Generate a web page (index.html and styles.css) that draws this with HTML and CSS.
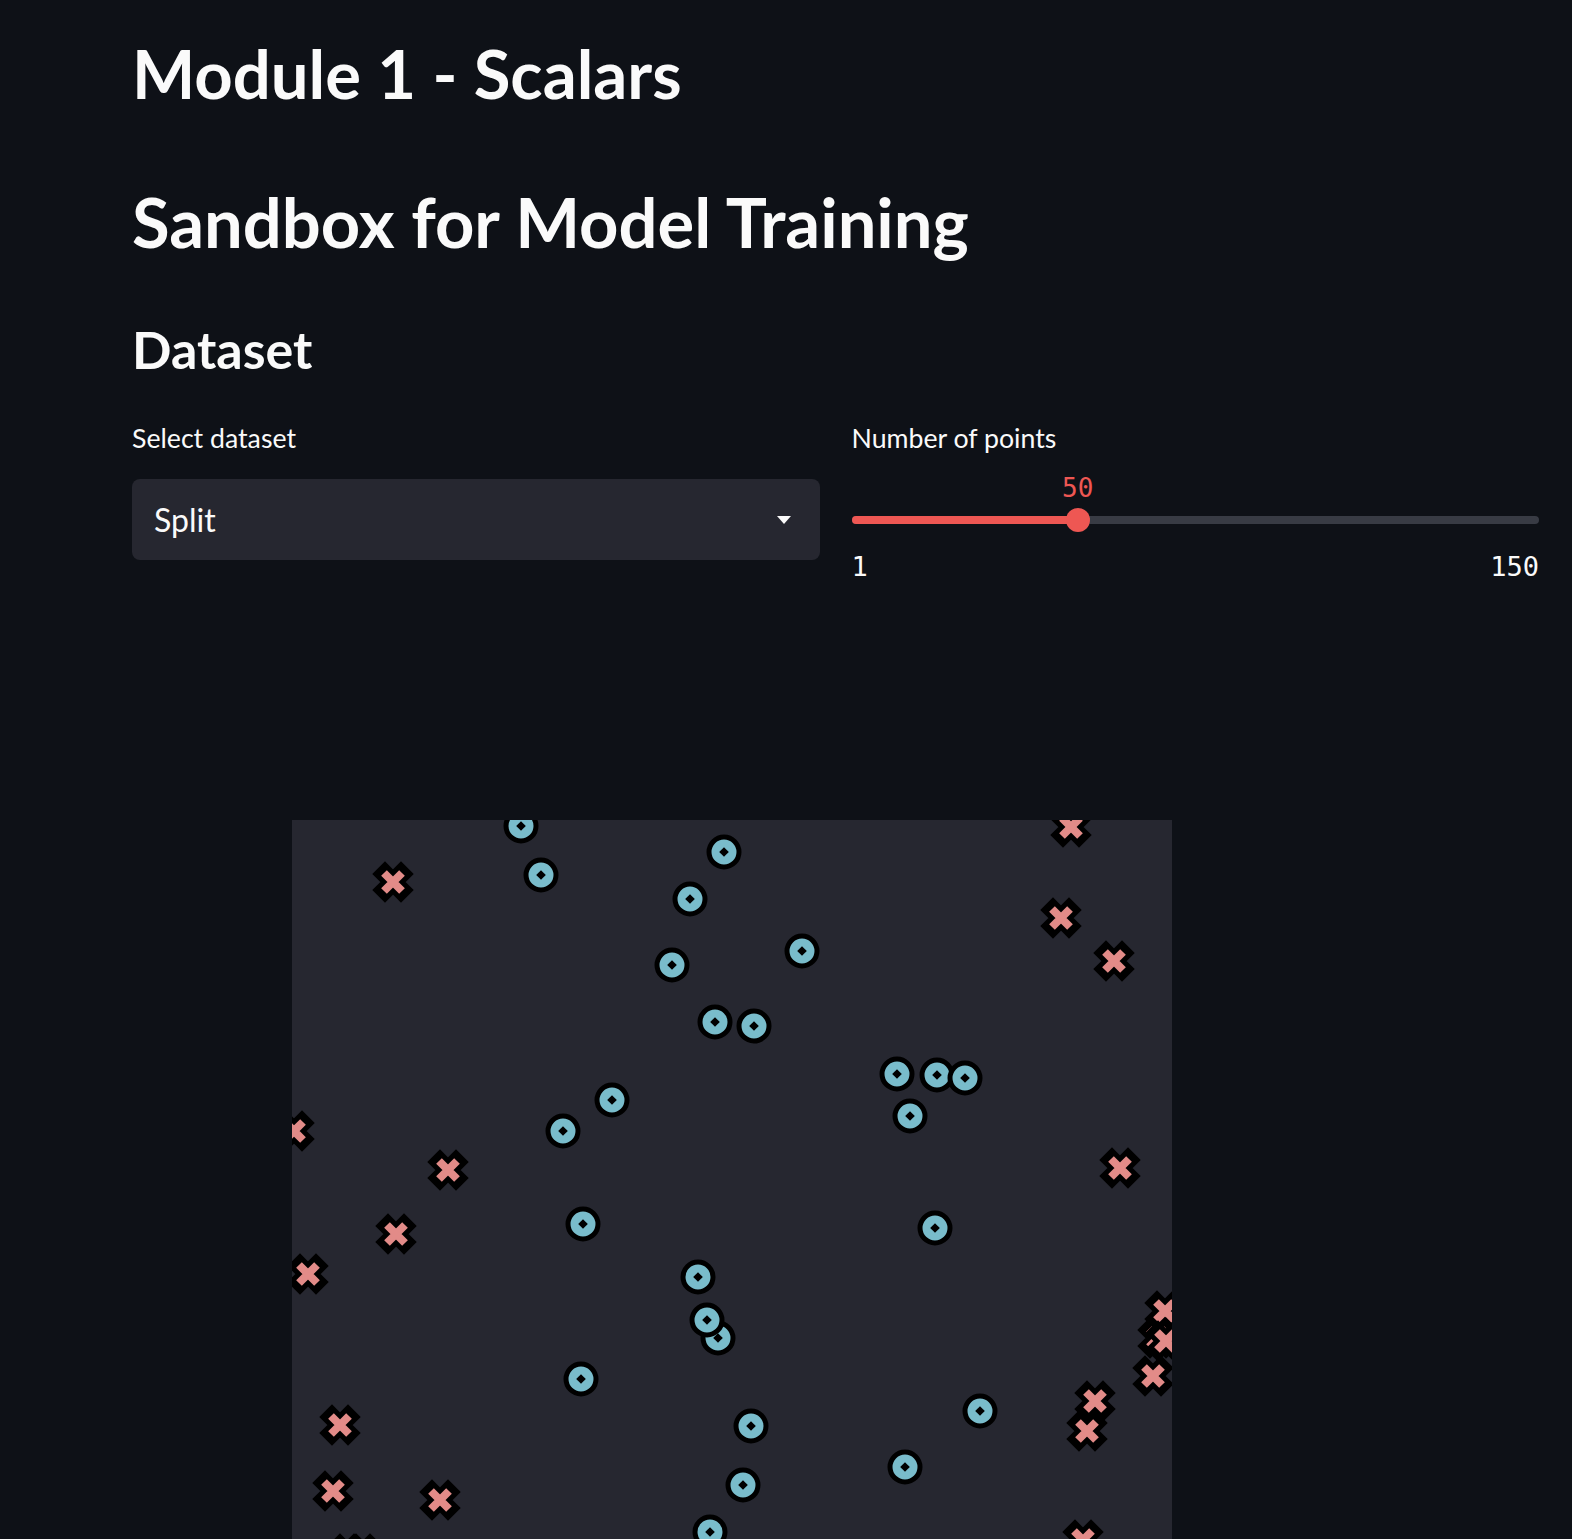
FILE: index.html
```html
<!DOCTYPE html>
<html lang="en">
<head>
<meta charset="utf-8">
<title>Module 1 - Scalars</title>
<link rel="stylesheet" href="styles.css">
</head>
<body>
<div class="main">
  <h1 class="title">Module 1 - Scalars</h1>
  <h1 class="title t2">Sandbox for Model Training</h1>
  <h2 class="sub">Dataset</h2>
  <div class="row">
    <div class="col">
      <div class="lbl">Select dataset</div>
      <div class="select">
        <span class="sel-text">Split</span>
        <svg class="caret" width="16" height="10" viewBox="0 0 16 10"><path d="M1 1 L15 1 L8 9 Z" fill="#fafafa"/></svg>
      </div>
    </div>
    <div class="col">
      <div class="lbl">Number of points</div>
      <div class="slider">
        <div class="val-row"><span class="val" style="left:32.9%">50</span></div>
        <div class="track">
          <div class="fill" style="width:32.9%"></div>
          <div class="thumb" style="left:32.9%"></div>
        </div>
        <div class="ticks"><span>1</span><span>150</span></div>
      </div>
    </div>
  </div>
  <div class="chart">
    <svg class="plot" width="880" height="880" viewBox="0 0 880 880">
      <defs>
        <g id="c">
          <circle r="15" fill="#79bccb" stroke="#000" stroke-width="5"/>
          <path d="M0 -4.8 L4.8 0 L0 4.8 L-4.8 0 Z" fill="#000"/>
        </g>
        <g id="x">
          <path d="M-8 -8 L8 8 M-8 8 L8 -8" stroke="#000" stroke-width="18" stroke-linecap="square" fill="none"/>
          <path d="M-9 -9 L9 9 M-9 9 L9 -9" stroke="#e28b88" stroke-width="8" fill="none"/>
        </g>
      </defs>
      <g transform="translate(0 1)">
      <use href="#c" x="229" y="5"/>
      <use href="#c" x="249" y="54"/>
      <use href="#c" x="432" y="31"/>
      <use href="#c" x="398" y="78"/>
      <use href="#c" x="510" y="130"/>
      <use href="#c" x="380" y="144"/>
      <use href="#c" x="423" y="201"/>
      <use href="#c" x="462" y="205"/>
      <use href="#c" x="605" y="253"/>
      <use href="#c" x="645" y="254"/>
      <use href="#c" x="673" y="257"/>
      <use href="#c" x="618" y="295"/>
      <use href="#c" x="320" y="279"/>
      <use href="#c" x="271" y="310"/>
      <use href="#c" x="291" y="403"/>
      <use href="#c" x="643" y="407"/>
      <use href="#c" x="406" y="456"/>
      <use href="#c" x="426" y="517"/>
      <use href="#c" x="415" y="499"/>
      <use href="#c" x="289" y="558"/>
      <use href="#c" x="688" y="590"/>
      <use href="#c" x="459" y="605"/>
      <use href="#c" x="613" y="646"/>
      <use href="#c" x="451" y="664"/>
      <use href="#c" x="418" y="711"/>

      <use href="#x" x="779" y="6"/>
      <use href="#x" x="101" y="61"/>
      <use href="#x" x="769" y="97"/>
      <use href="#x" x="822" y="140"/>
      <use href="#x" x="2" y="310"/>
      <use href="#x" x="156" y="349"/>
      <use href="#x" x="828" y="347"/>
      <use href="#x" x="104" y="413"/>
      <use href="#x" x="16" y="453"/>
      <use href="#x" x="873" y="490"/>
      <use href="#x" x="866" y="517"/>
      <use href="#x" x="874" y="520"/>
      <use href="#x" x="861" y="555"/>
      <use href="#x" x="803" y="580"/>
      <use href="#x" x="795" y="610"/>
      <use href="#x" x="48" y="604"/>
      <use href="#x" x="41" y="670"/>
      <use href="#x" x="148" y="679"/>
      <use href="#x" x="791" y="719"/>
      <use href="#x" x="56" y="733"/>
      <use href="#x" x="70" y="733"/>
      </g>
    </svg>
  </div>
</div>
</body>
</html>
```

FILE: styles.css
```css
html, body {
  margin: 0;
  padding: 0;
  background: #0e1117;
  color: #fafafa;
  font-family: "Lato", "Open Sans", sans-serif;
}

.main {
  width: 1407px;
  padding: 33px 0 0 132px;
}

.title {
  margin: 0;
  font-size: 67px;
  font-weight: 700;
  line-height: 1.2;
}

.t2 {
  margin-top: 68px;
  font-size: 68.7px;
}

.sub {
  margin: 54px 0 0;
  font-size: 52px;
  font-weight: 700;
  line-height: 1.2;
}

.row {
  display: grid;
  grid-template-columns: 1fr 1fr;
  column-gap: 32px;
  margin-top: 42px;
}

.lbl {
  font-size: 26.7px;
  line-height: 1.2;
}

.select {
  margin-top: 25px;
  height: 81px;
  background: #262730;
  border-radius: 8px;
  display: flex;
  align-items: center;
  justify-content: space-between;
  padding: 0 28px 0 22px;
}

.sel-text {
  font-size: 32px;
}

.slider {
  position: relative;
}

.val-row {
  position: relative;
  height: 30px;
  margin-top: 19px;
}

.val {
  position: absolute;
  top: 0;
  transform: translateX(-50%);
  font-family: "DejaVu Sans Mono", monospace;
  font-size: 26px;
  line-height: 30px;
  color: #ee5753;
}

.track {
  position: relative;
  margin-top: 13px;
  height: 8px;
  border-radius: 4px;
  background: #383b44;
}

.fill {
  height: 100%;
  border-radius: 4px;
  background: #ee5753;
}

.thumb {
  position: absolute;
  top: 50%;
  width: 24px;
  height: 24px;
  border-radius: 50%;
  background: #ee5753;
  transform: translate(-50%, -50%);
}

.ticks {
  display: flex;
  justify-content: space-between;
  margin-top: 28px;
  font-family: "DejaVu Sans Mono", monospace;
  font-size: 27px;
  line-height: 30px;
}

.chart {
  margin: 238px 0 0 160px;
  width: 880px;
  height: 880px;
  background: #262730;
}

.plot {
  display: block;
  overflow: hidden;
}
```
